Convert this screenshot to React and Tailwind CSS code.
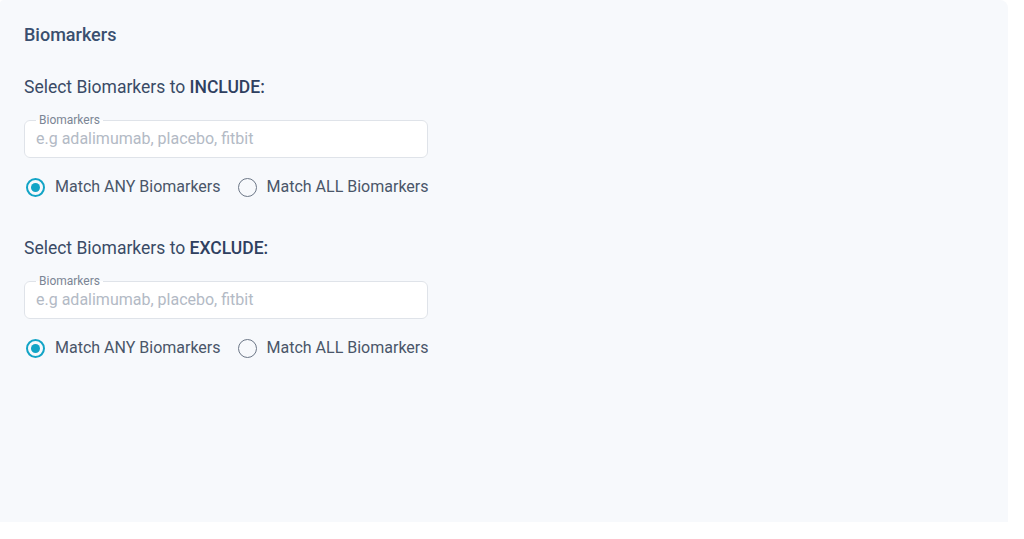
import { useState } from "react";

const RadioRow = ({ name }) => {
  const [mode, setMode] = useState("any");
  const options = [
    { value: "any", label: "Match ANY Biomarkers" },
    { value: "all", label: "Match ALL Biomarkers" },
  ];
  return (
    <div className="flex items-center gap-[15px] mt-[17px] h-6">
      {options.map((o) => (
        <label key={o.value} className="flex items-center cursor-pointer" onClick={() => setMode(o.value)}>
          <span
            className={
              "w-[19px] h-[19px] rounded-full flex items-center justify-center ml-[2px] " +
              (mode === o.value ? "border-2 border-[#12a4c6]" : "border-[1.5px] border-[#6c7787]")
            }
          >
            {mode === o.value && <span className="w-[9px] h-[9px] rounded-full bg-[#12a4c6]" />}
          </span>
          <span className="ml-[10px] text-base text-[#4a5669]">{o.label}</span>
          <input type="radio" name={name} className="hidden" readOnly checked={mode === o.value} />
        </label>
      ))}
    </div>
  );
};

const Section = ({ word, name }) => (
  <div>
    <h3 className="text-[17.5px] leading-6 text-[#3a4b66]">
      Select Biomarkers to <span className="font-medium text-[#2f4060]">{word}:</span>
    </h3>
    <fieldset className="mt-[15px] w-[404px] border border-[#dfe3e9] rounded-md bg-white px-[11px]">
      <legend className="px-[3px] text-[12px] leading-[12px] text-[#7b8594]">Biomarkers</legend>
      <input
        className="w-full h-[31px] pb-[6px] text-base text-[#3a4b66] placeholder:text-[#b3bac5] outline-none bg-transparent"
        placeholder="e.g adalimumab, placebo, fitbit"
      />
    </fieldset>
    <RadioRow name={name} />
  </div>
);

export default function App() {
  return (
    <div className="min-h-screen bg-white" style={{ fontFamily: "Roboto, 'Liberation Sans', sans-serif" }}>
      <div className="w-[1008px] h-[522px] bg-[#f7f9fc] rounded-tr-lg rounded-tl-sm px-6 pt-[23px]">
        <h2 className="text-[18px] leading-6 font-medium text-[#3a4f6f]">Biomarkers</h2>
        <div className="mt-7 flex flex-col gap-[37px]">
          <Section word="INCLUDE" name="include" />
          <Section word="EXCLUDE" name="exclude" />
        </div>
      </div>
    </div>
  );
}
